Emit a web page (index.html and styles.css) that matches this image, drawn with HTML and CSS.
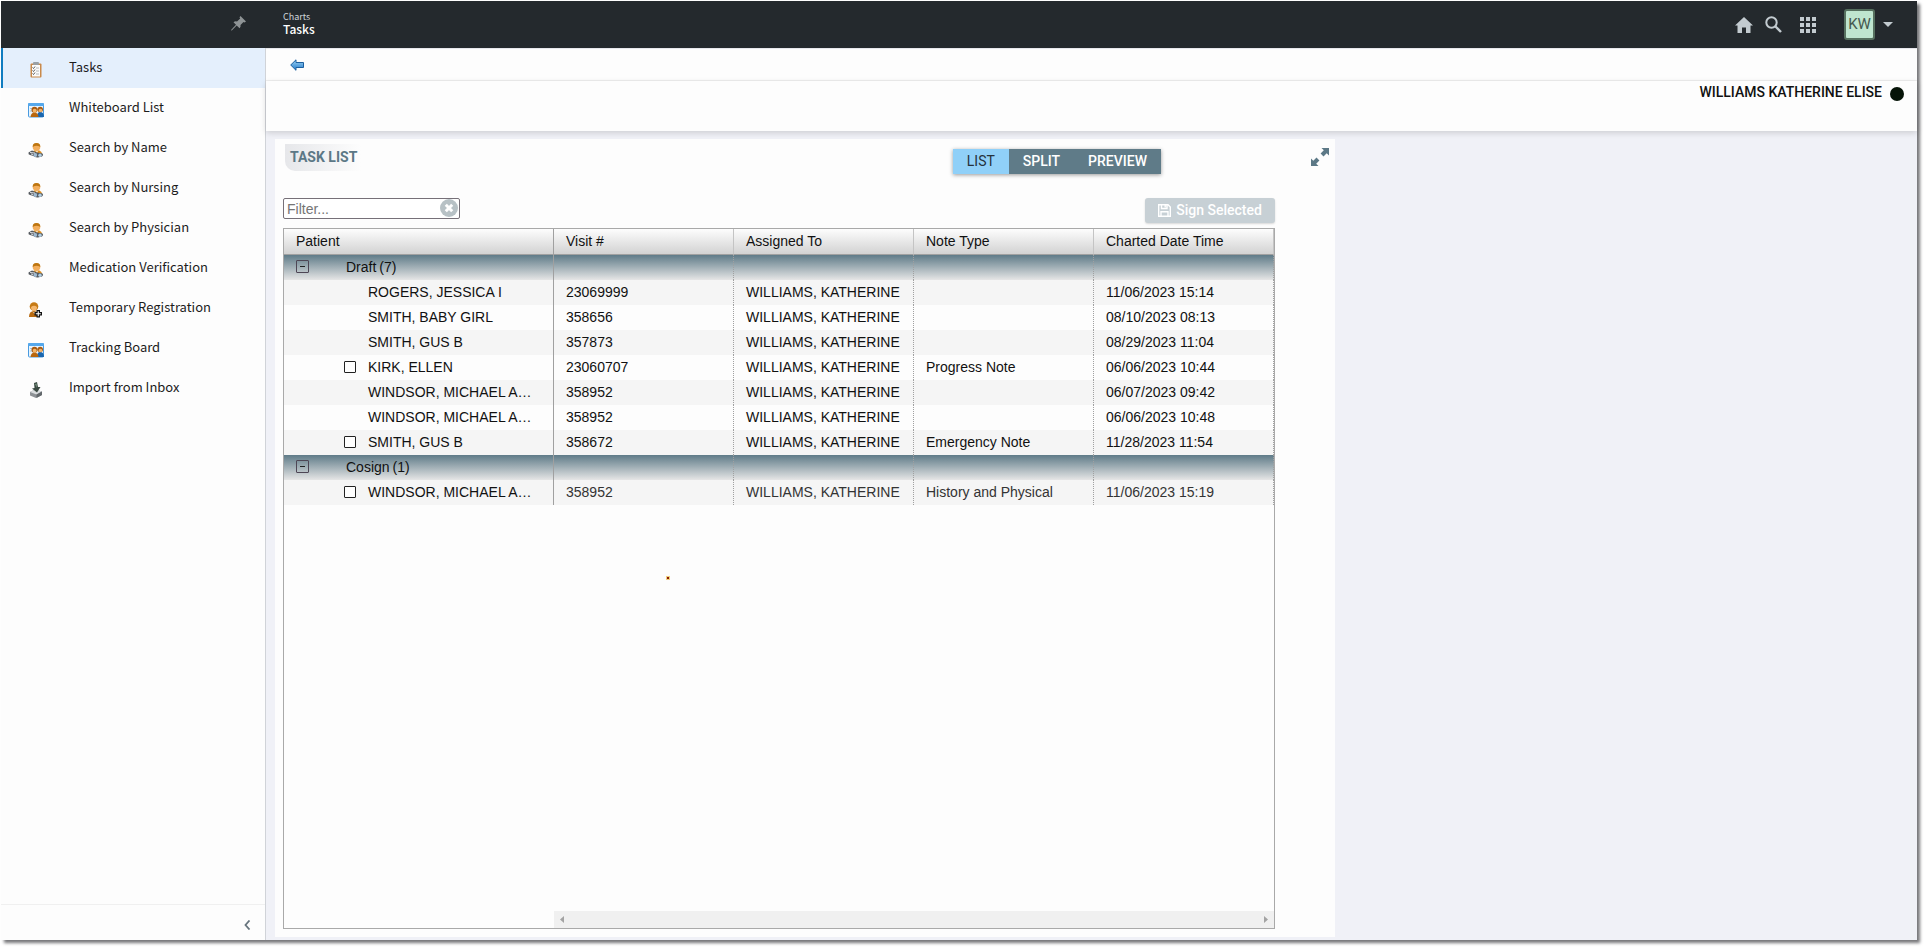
FILE: index.html
```html
<!DOCTYPE html>
<html lang="en">
<head>
<meta charset="utf-8">
<title>Charts - Tasks</title>
<link rel="stylesheet" href="styles.css">
</head>
<body>
<svg class="defs" aria-hidden="true">
  <symbol id="i-search" viewBox="0 0 16 16">
    <path d="M5 9Q8 7.500 11.500 8.500Q14 9.500 14 12L6 12z" fill="#d98a1e"/>
    <path d="M7 8.500L9 11L10.500 8.500z" fill="#f6dcb8"/>
    <circle cx="8.500" cy="5" r="3.800" fill="#f3ae5c"/>
    <path d="M4.700 5Q4.500 1 8.500 1Q12.500 1 12.300 5Q8.500 2.500 4.700 5z" fill="#bd7510"/>
    <path d="M.500 10.500L4 8.500L9 10.500L14.500 11.500Q16 13 14 14.500L11 15.300Q7 16 5.500 14L2 13Q0 12.500 .500 10.500z" fill="#54595e"/>
    <circle cx="7.300" cy="13" r="1.900" fill="#9db8cf"/><circle cx="12" cy="13.200" r="1.700" fill="#aecbe0"/>
    <path d="M2 10.500L7 11M3 12L5 12.500" stroke="#d7dade" stroke-width="1"/>
  </symbol>
  <symbol id="i-board" viewBox="0 0 16 16">
    <rect x=".5" y="1.500" width="15" height="13.500" rx="1" fill="#e8f4fd" stroke="#4a9be0"/>
    <rect x="0" y="1" width="16" height="3" rx="1" fill="#55a8ec"/>
    <path d="M2 6.500h3M2 9h2" stroke="#a9c3d8"/>
    <path d="M9 15Q9 10 12 10Q16 10 16 15z" fill="#1b66ae"/>
    <circle cx="12.200" cy="7.500" r="2.800" fill="#a95c14"/>
    <circle cx="12.500" cy="8.500" r="1.800" fill="#efb36b"/>
    <path d="M2.500 15Q3 10.500 6.500 10.500Q10 10.500 10.500 15z" fill="#b8660e"/>
    <circle cx="6.500" cy="7.800" r="3" fill="#a8590f"/>
    <circle cx="6.700" cy="8.800" r="2" fill="#f4b66a"/>
  </symbol>
</svg>
<div class="app">
  <header class="topbar">
    <div class="topbar-side">
      <button class="icon-btn" aria-label="Pin menu">
        <svg width="15" height="15" viewBox="0 0 15 15"><path d="M9.500 0L15 5.500L13.500 6.500L12.500 6L9.500 9Q10 11 8.500 12.300L5.700 9.500L.800 14.500L0 14.300L.500 13.500L5 8.800L2.500 6.300Q4 5 6 5.500L9.200 2.500L8.500 1.300z" fill="#8e9395"/></svg>
      </button>
    </div>
    <div class="crumbs">
      <span class="crumb-parent">Charts</span>
      <span class="crumb-page">Tasks</span>
    </div>
    <div class="top-actions">
      <button class="icon-btn" aria-label="Home"><svg width="18" height="16" viewBox="0 0 18 16"><path d="M9 0L18 8.500H15.500V16H11V10.500H7V16H2.500V8.500H0z" fill="#c3cbd0"/></svg></button>
      <button class="icon-btn find" aria-label="Search"><svg width="17" height="17" viewBox="0 0 17 17" fill="none" stroke="#c3cbd0"><circle cx="6.500" cy="6.500" r="5.200" stroke-width="2"/><path d="M10.500 10.500L16 16" stroke-width="2.400"/></svg></button>
      <button class="icon-btn apps" aria-label="Apps"><svg width="16" height="16" viewBox="0 0 16 16" fill="#c3cbd0"><path d="M0 0h4v4H0zM6 0h4v4H6zM12 0h4v4h-4zM0 6h4v4H0zM6 6h4v4H6zM12 6h4v4h-4zM0 12h4v4H0zM6 12h4v4H6zM12 12h4v4h-4z"/></svg></button>
      <button class="user" aria-label="User menu"><span class="avatar">KW</span><svg width="10" height="5" viewBox="0 0 10 5"><path d="M0 0H10L5 5z" fill="#c3cbd0"/></svg></button>
    </div>
  </header>
  <div class="body">
    <nav class="sidebar">
      <ul class="menu">
        <li><a class="item active" href="#"><svg width="16" height="16" viewBox="0 0 16 16"><rect x="2.500" y="1.500" width="11" height="14" rx="1" fill="#c98a4b"/><rect x="4" y="3" width="8" height="11.500" fill="#fbfbfb"/><rect x="5" y="0" width="6" height="3" rx="1" fill="#9aa0a5"/><path d="M4.500 5.500l1 1 1.500-2M4.500 8.500l1 1 1.500-2M4.500 11.500l1 1 1.500-2" stroke="#444" fill="none" stroke-width=".9"/><path d="M8 6h3M8 9h3M8 12h3" stroke="#b5b8ba"/></svg><span>Tasks</span></a></li>
        <li><a class="item" href="#"><svg width="16" height="16"><use href="#i-board"/></svg><span>Whiteboard List</span></a></li>
        <li><a class="item" href="#"><svg width="16" height="16"><use href="#i-search"/></svg><span>Search by Name</span></a></li>
        <li><a class="item" href="#"><svg width="16" height="16"><use href="#i-search"/></svg><span>Search by Nursing</span></a></li>
        <li><a class="item" href="#"><svg width="16" height="16"><use href="#i-search"/></svg><span>Search by Physician</span></a></li>
        <li><a class="item" href="#"><svg width="16" height="16"><use href="#i-search"/></svg><span>Medication Verification</span></a></li>
        <li><a class="item" href="#"><svg width="16" height="16" viewBox="0 0 16 16"><path d="M1 15Q1 9 6 9Q11 9 11 15z" fill="#b86a10"/><circle cx="6" cy="4.500" r="4.300" fill="#c67a15"/><path d="M3 5Q6 2.500 9 5Q9 9 6 9Q3 9 3 5z" fill="#f5b870"/><path d="M5 10l1.500 2L8 10z" fill="#f3d9b4"/><path d="M8.500 8h3.500v2h2v3.500h-2V15.500H8.500v-2h-2V10h2z" fill="#111"/><path d="M10.250 9.300v5M7.800 11.750h5" stroke="#fff" stroke-width="1.100"/></svg><span>Temporary Registration</span></a></li>
        <li><a class="item" href="#"><svg width="16" height="16"><use href="#i-board"/></svg><span>Tracking Board</span></a></li>
        <li><a class="item" href="#"><svg width="16" height="16" viewBox="0 0 16 16"><path d="M2 10L7 7.500L14 9.500V13L8 16L2 13.500z" fill="#8d9195"/><path d="M2 10L7 7.500L14 9.500L8.500 12.500z" fill="#d9dcde"/><path d="M8.500 12.500V16L14 13V9.500z" fill="#62676b"/><path d="M6 1L9 0L10 5L12.500 5L9 10.500L4 6.500L6.500 6z" fill="#3b4a42"/><path d="M7 2l1.500-.500L9 6z" fill="#7c9a86"/></svg><span>Import from Inbox</span></a></li>
      </ul>
      <div class="side-foot">
        <button class="icon-btn" aria-label="Collapse menu"><svg width="7" height="10" viewBox="0 0 7 10"><path d="M5.500 .500L1.500 5L5.500 9.500" fill="none" stroke="#66747d" stroke-width="1.800"/></svg></button>
      </div>
    </nav>
    <main class="main">
      <div class="toolbar">
        <button class="icon-btn" aria-label="Back"><svg width="14" height="12" viewBox="0 0 14 12"><defs><linearGradient id="arrow" x2="0" y2="1"><stop offset="0" stop-color="#9fd4f5"/><stop offset="1" stop-color="#1f78c8"/></linearGradient></defs><path d="M.700 6L6 .800V3.500H13.500V8.500H6V11.300z" fill="url(#arrow)" stroke="#1c5f9f"/></svg></button>
      </div>
      <div class="banner"><strong>WILLIAMS KATHERINE ELISE</strong><span class="status"></span></div>
      <div class="content">
        <section class="panel">
          <div class="panel-head">
            <h1>TASK LIST</h1>
            <div class="views" role="group" aria-label="View">
              <button class="on">LIST</button><button>SPLIT</button><button>PREVIEW</button>
            </div>
            <div class="expand">
              <button class="icon-btn" aria-label="Expand"><svg width="18" height="18" viewBox="0 0 18 18" fill="#5c7886"><path d="M10.500 0H18V7.500L15.700 5.200L12.500 8.400L9.600 5.500L12.800 2.300zM0 18V10.500L2.300 12.800L5.500 9.600L8.400 12.500L5.200 15.700L7.500 18z"/></svg></button>
            </div>
          </div>
          <div class="filter-row">
            <div class="filter">
              <input type="text" placeholder="Filter..." aria-label="Filter">
              <button class="clear" aria-label="Clear filter"><svg width="18" height="18" viewBox="0 0 18 18"><circle cx="9" cy="9" r="9" fill="#b7c1c5"/><path d="M5.800 5.800L12.200 12.200M12.200 5.800L5.800 12.200" stroke="#fff" stroke-width="3"/></svg></button>
            </div>
            <button class="sign" disabled><svg width="13" height="13" viewBox="0 0 13 13" fill="none" stroke="#fff" stroke-width="1.400"><path d="M.700 .700H10L12.300 3V12.300H.700z"/><path d="M3.500 .700V4.500H9V.700M3 12.300V7.700H10V12.300"/><path d="M7.200 1V3.500"/></svg><span>Sign Selected</span></button>
          </div>
          <div class="grid">
            <table>
              <colgroup><col class="c-patient"><col class="c-data"><col class="c-data"><col class="c-data"><col class="c-data"></colgroup>
              <thead><tr><th>Patient</th><th>Visit #</th><th>Assigned To</th><th>Note Type</th><th>Charted Date Time</th></tr></thead>
              <tbody>
                <tr class="group"><td><div class="group-name"><button class="toggle" aria-label="Collapse Draft"></button><span>Draft</span><span>(7)</span></div></td><td></td><td></td><td></td><td></td></tr>
                <tr class="odd"><td class="name">ROGERS, JESSICA I</td><td>23069999</td><td>WILLIAMS, KATHERINE</td><td></td><td>11/06/2023 15:14</td></tr>
                <tr><td class="name">SMITH, BABY GIRL</td><td>358656</td><td>WILLIAMS, KATHERINE</td><td></td><td>08/10/2023 08:13</td></tr>
                <tr class="odd"><td class="name">SMITH, GUS B</td><td>357873</td><td>WILLIAMS, KATHERINE</td><td></td><td>08/29/2023 11:04</td></tr>
                <tr><td class="pick"><label><input type="checkbox">KIRK, ELLEN</label></td><td>23060707</td><td>WILLIAMS, KATHERINE</td><td>Progress Note</td><td>06/06/2023 10:44</td></tr>
                <tr class="odd"><td class="name">WINDSOR, MICHAEL A…</td><td>358952</td><td>WILLIAMS, KATHERINE</td><td></td><td>06/07/2023 09:42</td></tr>
                <tr><td class="name">WINDSOR, MICHAEL A…</td><td>358952</td><td>WILLIAMS, KATHERINE</td><td></td><td>06/06/2023 10:48</td></tr>
                <tr class="odd"><td class="pick"><label><input type="checkbox">SMITH, GUS B</label></td><td>358672</td><td>WILLIAMS, KATHERINE</td><td>Emergency Note</td><td>11/28/2023 11:54</td></tr>
                <tr class="group"><td><div class="group-name"><button class="toggle" aria-label="Collapse Cosign"></button><span>Cosign</span><span>(1)</span></div></td><td></td><td></td><td></td><td></td></tr>
                <tr class="odd last"><td class="pick"><label><input type="checkbox">WINDSOR, MICHAEL A…</label></td><td>358952</td><td>WILLIAMS, KATHERINE</td><td>History and Physical</td><td>11/06/2023 15:19</td></tr>
              </tbody>
            </table>
            <span class="mark"></span>
            <div class="scrollbar">
              <svg width="4" height="7" viewBox="0 0 4 7"><path d="M4 0V7L0 3.500z" fill="#a3a3a3"/></svg>
              <svg width="4" height="7" viewBox="0 0 4 7"><path d="M0 0V7L4 3.500z" fill="#a3a3a3"/></svg>
            </div>
          </div>
        </section>
      </div>
    </main>
  </div>
</div>
</body>
</html>
```
FILE: styles.css
```css
* { box-sizing: border-box; }
html, body { height: 100%; }
body {
  margin: 0;
  padding: 1px 7px 7px 1px;
  background: #fff;
  color: #111;
  font: 14px/20px "Liberation Sans", Arial, sans-serif;
}
button { font: inherit; color: inherit; border: 0; padding: 0; background: none; }
svg { display: block; flex: none; }
.defs { position: absolute; width: 0; height: 0; }
.icon-btn { display: flex; }
.app { height: 100%; display: flex; flex-direction: column; background: #fdfdfd; box-shadow: 3px 3px 3px 0 #77777a; }

.topbar { flex: none; height: 47px; display: flex; align-items: center; background: #24292d; color: #fff; }
.topbar-side { width: 282px; display: flex; padding: 0 37px 2px 0; justify-content: flex-end; }
.crumbs { flex: 1; display: flex; flex-direction: column; padding-bottom: 2px; font-family: "Noto Sans CJK SC", sans-serif; }
.crumb-parent { font-size: 9px; line-height: 10px; color: #cfd5d9; }
.crumb-page { font-size: 12px; line-height: 14px; font-weight: 500; }
.top-actions { display: flex; align-items: center; padding-right: 24px; }
.find { margin-left: 12px; }
.apps { margin-left: 18px; }
.user { display: flex; align-items: center; gap: 8px; margin-left: 28px; }
.avatar { width: 31px; height: 31px; border: 2px solid #56705f; border-radius: 3px; background: #bfe5cf; color: #45584e; font: 400 15px/27px Roboto, sans-serif; text-align: center; }

.body { flex: 1; min-height: 0; display: flex; }
.sidebar { flex: none; width: 265px; display: flex; flex-direction: column; border-right: 1px solid #d0d3d8; }
.menu { flex: 1; margin: 0; padding: 0; list-style: none; }
.item { display: flex; align-items: center; gap: 25px; height: 40px; padding: 0 0 2px 25px; border-left: 2px solid transparent; color: #1c1c1c; text-decoration: none; font: 13px/20px "Noto Sans CJK SC", sans-serif; }
.item svg { margin-top: 6px; }
.item.active { background: #e4effc; border-color: #0f7cc0; }
.side-foot { height: 36px; display: flex; align-items: center; justify-content: flex-end; padding: 4px 14px 0 0; border-top: 1px solid #f0f0f0; }

.main { flex: 1; min-width: 0; display: flex; flex-direction: column; background: #f0f1f7; }
.toolbar { height: 33px; display: flex; align-items: center; padding-left: 24px; background: #fdfdfd; border-top: 1px solid #e6e7ec; border-bottom: 1px solid #efefef; }
.banner { height: 50px; display: flex; align-items: flex-start; justify-content: flex-end; gap: 8px; padding: 1px 13px 0 0; background: #fdfdfd; box-shadow: 0 2px 6px rgba(0, 0, 0, .15); font: 14px/20px Roboto, sans-serif; }
.banner strong { font-weight: 500; }
.status { width: 14px; height: 14px; margin-top: 5px; border-radius: 50%; background: #061408; }

.content { flex: 1; min-height: 0; display: grid; grid-template-columns: minmax(0, 1060fr) 582fr; padding: 8px 0 3px 9px; }
.panel { display: flex; flex-direction: column; min-height: 0; padding: 5px 60px 8px 8px; background: #fdfdfd; }
.panel-head { display: flex; align-items: flex-start; margin-right: -54px; }
h1 { margin: 0 0 0 2px; padding: 3px 4px 4px 5px; border-bottom-left-radius: 10px; background: linear-gradient(90deg, #e6e7ea, #fdfdfd); color: #5c7886; font: 700 14px/20px Roboto, sans-serif; }
.views { display: flex; margin: 5px 0 0 auto; box-shadow: 0 1px 4px rgba(0, 0, 0, .4); font: 500 14px/25px Roboto, sans-serif; }
.views button { padding: 0 14px; background: #5f7b88; color: #fff; }
.views .on { background: #90d0f8; color: #26323c; font-weight: 400; }
.expand { width: 168px; display: flex; justify-content: flex-end; padding-top: 4px; }
.filter-row { display: flex; justify-content: space-between; margin-top: 24px; height: 30px; }
.filter { position: relative; width: 177px; height: 21px; }
.filter input { width: 100%; height: 21px; padding: 0 26px 0 3px; border: 1px solid #767078; border-radius: 2px; background: #fff; font: 14px/17px "Liberation Sans", Arial, sans-serif; }
.filter input::placeholder { color: #757575; }
.clear { position: absolute; top: 1px; right: 2px; }
.sign { display: flex; align-items: center; justify-content: center; gap: 5px; width: 130px; height: 25px; border-radius: 3px; background: #c7d0d5; box-shadow: 0 1px 2px rgba(0, 0, 0, .15); color: #fff; font: 500 14px/25px Roboto, sans-serif; }

.grid { position: relative; flex: 1; min-height: 0; display: flex; flex-direction: column; border: 1px solid #a9a9a9; overflow: hidden; }
table { width: 100%; table-layout: fixed; border-collapse: separate; border-spacing: 0; }
.c-patient { width: 270px; }
th { height: 26px; padding: 0 12px 2px; border-right: 1px solid #c4c4c4; border-bottom: 1px solid #a0a0a0; background: linear-gradient(#fdfdfd, #d2d2d2); font-weight: 400; text-align: left; white-space: nowrap; }
td { height: 25px; padding: 0 12px 2px; border-right: 1px dotted #a0a0a0; white-space: nowrap; overflow: hidden; }
th:first-child, td:first-child { border-right: 1px solid #a0a0a0; }
.odd td { background: #f5f5f5; }
.last td + td { color: #333; }
.group td { background: linear-gradient(#5f7b88, #e6e6e6); }
td.name { padding-left: 84px; }
td.pick { padding-left: 60px; }
.pick label { display: flex; align-items: center; gap: 12px; }
.pick input { appearance: none; width: 12px; height: 12px; margin: 0; border: 1px solid #222; border-radius: 1px; background: #fff; }
.group-name { display: flex; align-items: center; gap: 3px; }
.toggle { display: flex; align-items: center; justify-content: center; width: 13px; height: 13px; margin-right: 34px; border: 1px solid #4e4655; border-radius: 1px; }
.toggle::before { content: ""; width: 5px; height: 1px; background: #222; }
.mark { position: absolute; left: 382px; top: 347px; width: 4px; height: 4px; border: 1px solid #f0d080; background: #8a1a08; }
.scrollbar { display: flex; justify-content: space-between; align-items: center; height: 17px; margin: auto 0 0 270px; padding: 0 6px; background: #f0f0f0; }
```
